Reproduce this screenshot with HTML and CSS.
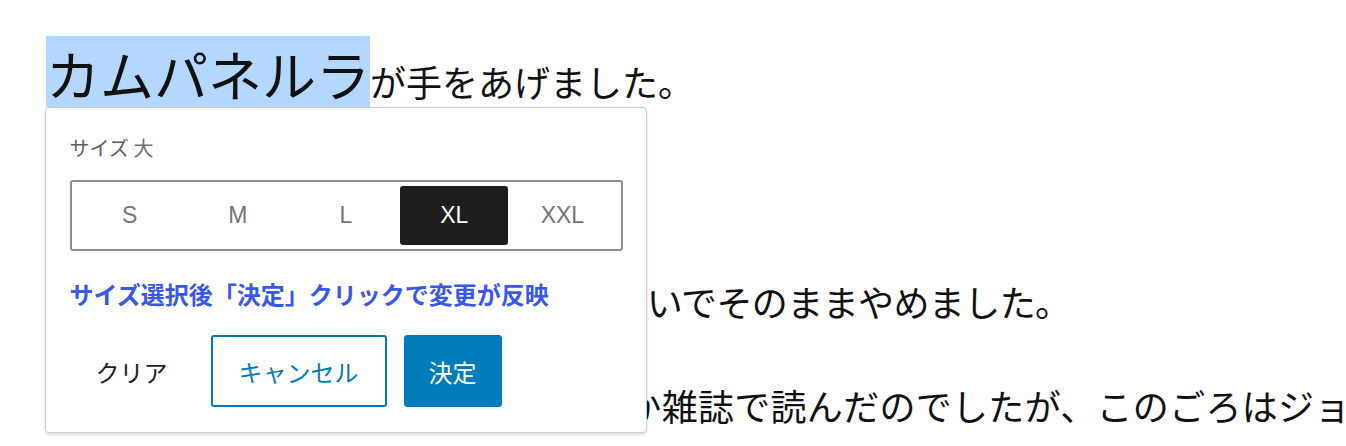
FILE: index.html
```html
<!DOCTYPE html>
<html lang="ja">
<head>
<meta charset="utf-8">
<title>サイズ選択</title>
<link rel="stylesheet" href="styles.css">
</head>
<body>
<div class="page">
  <div class="text">
    <p class="para first"><span class="mark">カムパネルラ</span>が手をあげました。</p>
    <p class="para">それから四五人手をあげました。</p>
    <p class="para tight">ジョバンニも手をあげようとして、急いでそのままやめました。</p>
    <p class="para loose">たしかにあれがみんな星だと、いつか雑誌で読んだのでしたが、このごろはジョバンニはまるで毎日教室でもねむく、本を読むひまも読む本もないので、なんだかどんなこともよくわからないという気持ちがするのでした。</p>
  </div>

  <div class="popover">
    <div class="label">サイズ <span class="label-value">大</span></div>
    <div class="segmented">
      <button class="seg">S</button>
      <button class="seg">M</button>
      <button class="seg">L</button>
      <button class="seg is-active">XL</button>
      <button class="seg">XXL</button>
    </div>
    <p class="hint">サイズ選択後「決定」クリックで変更が反映</p>
    <div class="actions">
      <button class="btn btn-tertiary">クリア</button>
      <button class="btn btn-secondary">キャンセル</button>
      <button class="btn btn-primary">決定</button>
    </div>
  </div>
</div>
</body>
</html>
```

FILE: styles.css
```css
html, body {
  margin: 0;
  padding: 0;
  background: #ffffff;
  overflow: hidden;
}

body {
  font-family: "Noto Sans CJK JP", "Noto Sans", sans-serif;
  color: #111111;
}

.page {
  position: relative;
  width: 1346px;
  height: 446px;
  overflow: hidden;
}

.text {
  padding: 42px 0 0 46px;
}

.para {
  margin: 0 0 40px;
  font-size: 36px;
  line-height: 64px;
  white-space: nowrap;
}

.para.first {
  margin-bottom: 52px;
}

.para.tight {
  letter-spacing: -0.6px;
}

.para.loose {
  letter-spacing: 0.3px;
}

.mark {
  font-size: 54px;
  background: linear-gradient(#b3d7ff, #b3d7ff) left 2px / 100% 71px no-repeat;
}

/* Popover */
.popover {
  position: absolute;
  left: 45px;
  top: 107px;
  width: 602px;
  height: 326px;
  box-sizing: border-box;
  background: #ffffff;
  border: 1.5px solid #cccccc;
  border-radius: 4px;
  box-shadow: 0 2px 3px rgba(0, 0, 0, 0.12);
  padding: 26px 23.5px 0;
  display: flex;
  flex-direction: column;
}

.label {
  font-size: 20px;
  line-height: 28px;
  color: #5e5e5e;
}

.label-value {
  color: #6f6f6f;
}

.segmented {
  margin-top: 18px;
  height: 71px;
  box-sizing: border-box;
  border: 2px solid #8f8f8f;
  border-radius: 3px;
  padding: 4px;
  display: grid;
  grid-template-columns: repeat(5, 1fr);
}

.seg {
  border: 0;
  background: transparent;
  border-radius: 3px;
  font-family: "Liberation Sans", "Noto Sans CJK JP", sans-serif;
  font-size: 23px;
  color: #757575;
  padding: 0;
  margin: 0;
}

.seg.is-active {
  background: #1e1e1e;
  color: #ffffff;
}

.hint {
  margin: 25px 0 0;
  font-size: 24px;
  line-height: 36px;
  font-weight: 700;
  color: #3858e9;
}

.actions {
  margin-top: 23px;
  display: flex;
  gap: 17px;
}

.btn {
  height: 72px;
  box-sizing: border-box;
  border-radius: 3px;
  font-family: "Noto Sans CJK JP", sans-serif;
  font-size: 24px;
  padding: 0 25px;
  margin: 0;
  border: 1.5px solid transparent;
  background: transparent;
}

.btn-tertiary {
  color: #1e1e1e;
}

.btn-secondary {
  color: #007cba;
  border: 2px solid #007cba;
  background: #ffffff;
  padding: 0 26px;
}

.btn-primary {
  color: #ffffff;
  background: #007cba;
  border-color: #007cba;
  padding: 0 24px;
}
```
